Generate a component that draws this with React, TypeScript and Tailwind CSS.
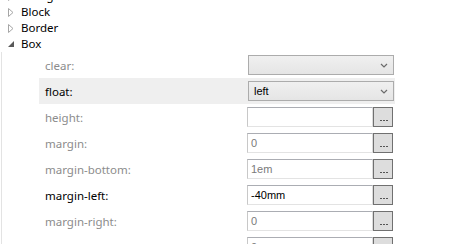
import React from "react";

const font = { fontFamily: '"Noto Sans", "Open Sans", sans-serif' };
const valFont = { fontFamily: '"Liberation Sans", Arial, sans-serif' };

function Collapsed() {
  return (
    <svg width="6" height="9" viewBox="0 0 6 9" className="shrink-0">
      <path d="M0.5 0.5 L5 4.5 L0.5 8.5 Z" fill="#ffffff" stroke="#a6a6a6" strokeWidth="1" />
    </svg>
  );
}

function Expanded() {
  return (
    <svg width="6" height="6" viewBox="0 0 6 6" className="shrink-0">
      <path d="M6 0 L6 6 L0 6 Z" fill="#595959" />
    </svg>
  );
}

function TreeRow({ label, open }: { label: string; open?: boolean }) {
  return (
    <div className="flex h-[16px] items-center">
      <div className="flex w-[21px] justify-center pl-[1px]">
        {open ? <Expanded /> : <Collapsed />}
      </div>
      <span className="mt-[-1px] text-[11.5px] leading-none text-black" style={font}>
        {label}
      </span>
    </div>
  );
}

function Chevron() {
  return (
    <svg width="8" height="5" viewBox="0 0 8 5">
      <path d="M1 1 L4 4 L7 1" fill="none" stroke="#6b6b6b" strokeWidth="1.2" />
    </svg>
  );
}

function Combo({ value }: { value?: string }) {
  return (
    <div className="ml-[1px] flex h-[20px] w-[146px] items-center justify-between border border-[#acacac] bg-gradient-to-b from-[#f0f0f0] to-[#e5e5e5] pl-[5px] pr-[5px]">
      <span className="text-[11px] leading-none text-black" style={valFont}>
        {value ?? ""}
      </span>
      <Chevron />
    </div>
  );
}

function TextInput({ value, dark }: { value?: string; dark?: boolean }) {
  return (
    <div className="flex h-[20px] w-[147px]">
      <div className="flex h-[20px] w-[126px] items-center border border-t-[#abadb3] border-l-[#c8c8c8] border-r-[#dcdcdc] border-b-[#e3e3e3] bg-white pl-[3px]">
        <span
          className={`text-[11px] leading-none ${dark ? "text-black" : "text-[#7a7a7a]"}`}
          style={valFont}
        >
          {value ?? ""}
        </span>
      </div>
      <div className="relative h-[20px] w-[20px] border border-[#707070] bg-[#dddddd]">
        <div className="absolute bottom-[5px] left-[6px] flex gap-[1px]">
          <div className="h-[1px] w-[2px] bg-[#555]" />
          <div className="h-[1px] w-[2px] bg-[#555]" />
          <div className="h-[1px] w-[2px] bg-[#555]" />
        </div>
      </div>
    </div>
  );
}

function PropRow({
  label,
  set,
  highlight,
  children,
}: {
  label: string;
  set?: boolean;
  highlight?: boolean;
  children: React.ReactNode;
}) {
  return (
    <div
      className={`ml-[38px] flex h-[26px] w-[356px] items-center ${highlight ? "bg-[#efefef]" : ""}`}
    >
      <div className="mt-[-2px] w-[208px] pl-[6px]">
        <span
          className={`text-[11.5px] leading-none ${set ? "text-black" : "text-[#8c8c8c]"}`}
          style={font}
        >
          {label}
        </span>
      </div>
      {children}
    </div>
  );
}

export default function App() {
  return (
    <div className="h-[244px] w-[461px] overflow-hidden bg-white">
      <div className="mt-[-12px]">
        <TreeRow label="Background" />
        <TreeRow label="Block" />
        <TreeRow label="Border" />
        <TreeRow label="Box" open />
        <div className="ml-[1px] border-l border-[#e3e3e3]">
          <div className="ml-[-1px]">
            <PropRow label="clear:">
              <Combo />
            </PropRow>
            <PropRow label="float:" set highlight>
              <Combo value="left" />
            </PropRow>
            <PropRow label="height:">
              <TextInput />
            </PropRow>
            <PropRow label="margin:">
              <TextInput value="0" />
            </PropRow>
            <PropRow label="margin-bottom:">
              <TextInput value="1em" />
            </PropRow>
            <PropRow label="margin-left:" set>
              <TextInput value="-40mm" dark />
            </PropRow>
            <PropRow label="margin-right:">
              <TextInput value="0" />
            </PropRow>
            <PropRow label="margin-top:">
              <TextInput value="0" />
            </PropRow>
          </div>
        </div>
      </div>
    </div>
  );
}
